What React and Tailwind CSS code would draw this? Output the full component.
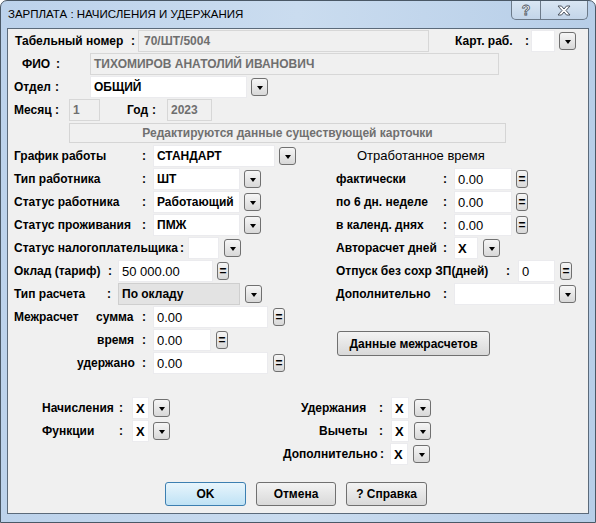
import React from "react";
import clsx from "clsx";

const font = "font-['Liberation_Sans',Arial,sans-serif]";

function Row({ className, children }) {
  return <div className={clsx("flex h-[22px] shrink-0 items-center", className)}>{children}</div>;
}

function Lbl({ className, children }) {
  return (
    <span className={clsx("shrink-0 whitespace-nowrap text-[12px] font-bold leading-[14px] text-black", className)}>
      {children}
    </span>
  );
}

function Colon({ className }) {
  return <span className={clsx("shrink-0 text-[12px] font-bold leading-[14px] text-black", className)}>:</span>;
}

function Box({ className, variant = "white", bold = true, children }) {
  return (
    <div
      className={clsx(
        "flex h-[22px] shrink-0 items-center overflow-hidden whitespace-nowrap pl-[3px] text-[12px] leading-none",
        bold ? "font-bold" : "text-[13px] font-normal",
        variant === "white" && "border border-[#ebebee] bg-white text-black",
        variant === "gray" && "border border-[#d7d7d7] bg-[#f0f0f0] text-[#6f6f6f]",
        variant === "dark" && "border border-[#cfcfcf] bg-[#e3e3e3] text-black",
        className,
      )}
    >
      {children}
    </div>
  );
}

function Drop({ className }) {
  return (
    <div
      className={clsx(
        "flex h-[18px] w-[17px] shrink-0 items-center justify-center rounded-[3px] border border-[#707070] bg-linear-to-b from-[#f6f6f6] to-[#d8d8d8]",
        className,
      )}
    >
      <span className="mt-[1px] block h-0 w-0 border-x-[3.5px] border-t-[4px] border-x-transparent border-t-black" />
    </div>
  );
}

function Eq({ className }) {
  return (
    <div
      className={clsx(
        "flex h-[18px] w-[12px] shrink-0 items-center justify-center rounded-[3px] border border-[#707070] bg-linear-to-b from-[#f6f6f6] to-[#d8d8d8] text-[12px] font-bold leading-none text-black",
        className,
      )}
    >
      =
    </div>
  );
}

function Btn({ className, primary, children }) {
  return (
    <button
      className={clsx(
        "flex h-[24px] shrink-0 items-center justify-center rounded-[3px] border text-[12px] font-bold text-black",
        primary
          ? "border-[#3c7fb1] bg-linear-to-b from-[#e8f5fc] to-[#bfe2f5]"
          : "border-[#707070] bg-linear-to-b from-[#f3f3f3] to-[#d9d9d9]",
        className,
      )}
    >
      {children}
    </button>
  );
}

export default function App() {
  return (
    <div className={clsx("h-[523px] w-[596px] overflow-hidden bg-white", font)}>
      <div className="flex h-[523px] w-[596px] flex-col rounded-t-[7px] border border-[#4a5866] bg-linear-to-r from-[#bcd2eb] via-[#cadcef] to-[#b7cee8] px-[6px] pb-[8px]">
        {/* title bar */}
        <div className="flex h-[27px] shrink-0 items-start">
          <span className="ml-[1px] mt-[6px] text-[11.5px] leading-[15px] text-black">
            ЗАРПЛАТА : НАЧИСЛЕНИЯ И УДЕРЖАНИЯ
          </span>
          <div className="ml-auto mr-[1px] flex h-[19px] overflow-hidden rounded-b-[5px] border border-t-0 border-[#6c7a89] bg-linear-to-b from-[#d9e6f3] to-[#c3d5e9]">
            <div className="flex w-[29px] items-center justify-center border-r border-[#6c7a89] text-[14px] font-bold leading-none text-white [-webkit-text-stroke:0.8px_#4d5560]">
              ?
            </div>
            <div className="flex w-[46px] items-center justify-center">
              <svg width="14" height="11" viewBox="0 0 14 11">
                <path
                  d="M1 1 L4.5 1 L7 4 L9.5 1 L13 1 L9 5.5 L13 10 L9.5 10 L7 7 L4.5 10 L1 10 L5 5.5 Z"
                  fill="#ffffff"
                  stroke="#4d5560"
                  strokeWidth="1"
                  strokeLinejoin="round"
                />
              </svg>
            </div>
          </div>
        </div>

        {/* client area */}
        <div className="flex flex-1 flex-col gap-[1px] border border-[#5b6a7a] bg-[#f0f0f0] pt-[1px]">
          <Row>
            <Lbl className="ml-[7px] w-[116px]">Табельный номер</Lbl>
            <Colon className="w-[7px]" />
            <Box variant="gray" className="w-[291px] pl-[5px]">70/ШТ/5004</Box>
            <Lbl className="ml-[26px] w-[70px]">Карт. раб.</Lbl>
            <Colon className="w-[6px]" />
            <Box className="w-[24px]" />
            <Drop className="ml-[4px]" />
          </Row>
          <Row>
            <Lbl className="ml-[14px] w-[34px]">ФИО</Lbl>
            <Colon className="w-[34px]" />
            <Box variant="gray" className="w-[409px]">ТИХОМИРОВ АНАТОЛИЙ ИВАНОВИЧ</Box>
          </Row>
          <Row>
            <Lbl className="ml-[6px] w-[41px]">Отдел</Lbl>
            <Colon className="w-[35px]" />
            <Box className="w-[157px] pl-[2px]">ОБЩИЙ</Box>
            <Drop className="ml-[4px]" />
          </Row>
          <Row>
            <Lbl className="ml-[6px] w-[41px]">Месяц</Lbl>
            <Colon className="w-[14px]" />
            <Box variant="gray" className="w-[31px]">1</Box>
            <Lbl className="ml-[27px] w-[25px]">Год</Lbl>
            <Colon className="w-[15px]" />
            <Box variant="gray" className="w-[45px]">2023</Box>
          </Row>
          <Row>
            <div className="ml-[61px] flex h-[20px] w-[437px] items-center justify-center border border-[#d5d5d5] bg-[#f0f0f0] text-[12px] font-bold text-[#707070]">
              Редактируются данные существующей карточки
            </div>
          </Row>

          {/* middle section */}
          <div className="flex">
            <div className="flex w-[322px] shrink-0 flex-col gap-[1px]">
              <Row>
                <Lbl className="ml-[6px] w-[128px]">График работы</Lbl>
                <Colon className="w-[11px]" />
                <Box className="w-[122px]">СТАНДАРТ</Box>
                <Drop className="ml-[4px]" />
              </Row>
              <Row>
                <Lbl className="ml-[6px] w-[128px]">Тип работника</Lbl>
                <Colon className="w-[11px]" />
                <Box className="w-[87px]">ШТ</Box>
                <Drop className="ml-[4px]" />
              </Row>
              <Row>
                <Lbl className="ml-[6px] w-[128px]">Статус работника</Lbl>
                <Colon className="w-[11px]" />
                <Box className="w-[87px]">Работающий</Box>
                <Drop className="ml-[4px]" />
              </Row>
              <Row>
                <Lbl className="ml-[6px] w-[128px]">Статус проживания</Lbl>
                <Colon className="w-[11px]" />
                <Box className="w-[87px]">ПМЖ</Box>
                <Drop className="ml-[4px]" />
              </Row>
              <Row>
                <Lbl className="ml-[6px] w-[166px]">Статус налогоплательщика</Lbl>
                <Colon className="w-[8px]" />
                <Box className="w-[31px]" />
                <Drop className="ml-[5px] w-[16px]" />
              </Row>
              <Row>
                <Lbl className="ml-[6px] w-[94px]">Оклад (тариф)</Lbl>
                <Colon className="w-[10px]" />
                <Box bold={false} className="w-[95px]">50 000.00</Box>
                <Eq className="ml-[4px]" />
              </Row>
              <Row>
                <Lbl className="ml-[6px] w-[93px]">Тип расчета</Lbl>
                <Colon className="w-[11px]" />
                <Box variant="dark" className="w-[122px]">По окладу</Box>
                <Drop className="ml-[5px] w-[16px]" />
              </Row>
              <Row>
                <Lbl className="ml-[6px] w-[82px]">Межрасчет</Lbl>
                <Lbl className="w-[46px]">сумма</Lbl>
                <Colon className="w-[11px]" />
                <Box bold={false} className="w-[115px]">0.00</Box>
                <Eq className="ml-[5px]" />
              </Row>
              <Row>
                <Lbl className="ml-[89px] w-[45px]">время</Lbl>
                <Colon className="w-[11px]" />
                <Box bold={false} className="w-[58px]">0.00</Box>
                <Eq className="ml-[5px]" />
              </Row>
              <Row>
                <Lbl className="ml-[69px] w-[65px]">удержано</Lbl>
                <Colon className="w-[11px]" />
                <Box bold={false} className="w-[115px]">0.00</Box>
                <Eq className="ml-[5px]" />
              </Row>
            </div>

            <div className="flex flex-1 flex-col gap-[1px]">
              <Row>
                <span className="ml-[27px] whitespace-nowrap text-[13px] leading-[14px] text-black">
                  Отработанное время
                </span>
              </Row>
              <Row>
                <Lbl className="ml-[6px] w-[107px]">фактически</Lbl>
                <Colon className="w-[11px]" />
                <Box bold={false} className="w-[58px]">0.00</Box>
                <Eq className="ml-[4px]" />
              </Row>
              <Row>
                <Lbl className="ml-[6px] w-[107px]">по 6 дн. неделе</Lbl>
                <Colon className="w-[11px]" />
                <Box bold={false} className="w-[58px]">0.00</Box>
                <Eq className="ml-[4px]" />
              </Row>
              <Row>
                <Lbl className="ml-[6px] w-[107px]">в календ. днях</Lbl>
                <Colon className="w-[11px]" />
                <Box bold={false} className="w-[58px]">0.00</Box>
                <Eq className="ml-[4px]" />
              </Row>
              <Row>
                <Lbl className="ml-[6px] w-[107px]">Авторасчет дней</Lbl>
                <Colon className="w-[11px]" />
                <Box className="w-[24px] text-[13px]">X</Box>
                <Drop className="ml-[5px] w-[16px]" />
              </Row>
              <Row>
                <Lbl className="ml-[6px] w-[170px]">Отпуск без сохр ЗП(дней)</Lbl>
                <Colon className="w-[12px]" />
                <Box bold={false} className="w-[37px]">0</Box>
                <Eq className="ml-[5px] w-[11px]" />
              </Row>
              <Row>
                <Lbl className="ml-[6px] w-[107px]">Дополнительно</Lbl>
                <Colon className="w-[11px]" />
                <Box className="w-[101px]" />
                <Drop className="ml-[4px]" />
              </Row>
              <Btn className="ml-[7px] mt-[25px] h-[25px] w-[153px]">Данные межрасчетов</Btn>
            </div>
          </div>

          {/* bottom section */}
          <div className="mt-[22px] flex flex-col gap-[1px]">
            <Row>
              <Lbl className="ml-[34px] w-[77px]">Начисления</Lbl>
              <Colon className="w-[13px]" />
              <Box className="w-[17px] text-[13px]">X</Box>
              <Drop className="ml-[4px] w-[16px]" />
              <Lbl className="ml-[131px] w-[78px]">Удержания</Lbl>
              <Colon className="w-[12px]" />
              <Box className="w-[18px] text-[13px]">X</Box>
              <Drop className="ml-[5px] w-[16px]" />
            </Row>
            <Row>
              <Lbl className="ml-[34px] w-[77px]">Функции</Lbl>
              <Colon className="w-[13px]" />
              <Box className="w-[17px] text-[13px]">X</Box>
              <Drop className="ml-[4px] w-[16px]" />
              <Lbl className="ml-[149px] w-[60px]">Вычеты</Lbl>
              <Colon className="w-[12px]" />
              <Box className="w-[18px] text-[13px]">X</Box>
              <Drop className="ml-[5px] w-[16px]" />
            </Row>
            <Row>
              <Lbl className="ml-[275px] w-[97px]">Дополнительно</Lbl>
              <Colon className="w-[10px]" />
              <Box className="w-[18px] text-[13px]">X</Box>
              <Drop className="ml-[5px] w-[16px]" />
            </Row>
          </div>

          <div className="mt-[16px] flex">
            <Btn primary className="ml-[157px] w-[81px]">OK</Btn>
            <Btn className="ml-[10px] w-[80px]">Отмена</Btn>
            <Btn className="ml-[10px] w-[81px]">? Справка</Btn>
          </div>
        </div>
      </div>
    </div>
  );
}
